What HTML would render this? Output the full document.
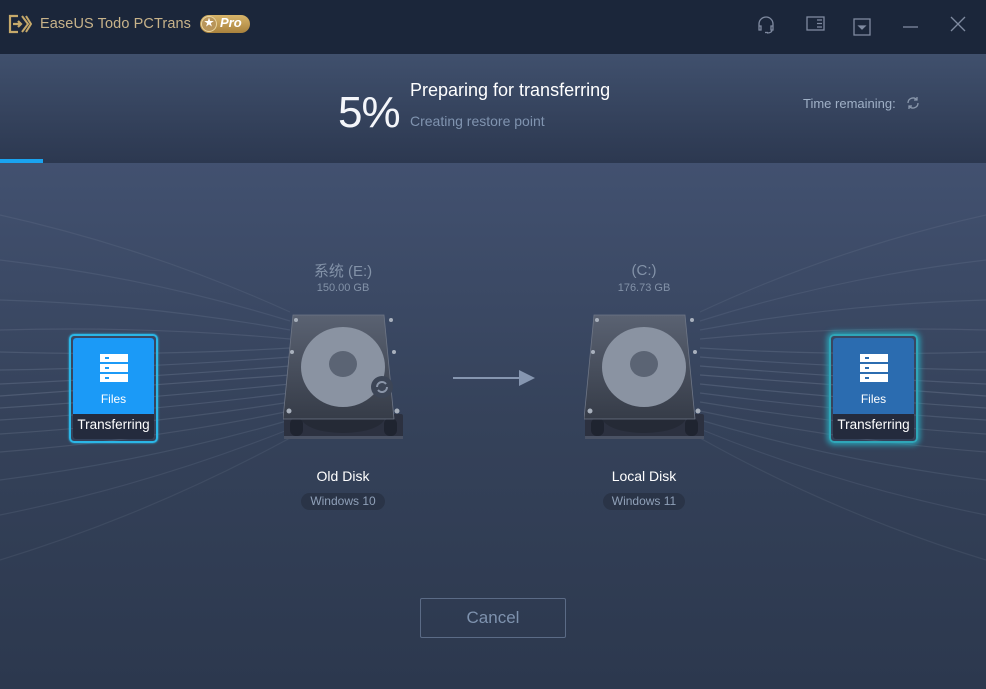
<!DOCTYPE html>
<html><head><meta charset="utf-8"><style>
*{margin:0;padding:0;box-sizing:border-box}
body{width:986px;height:689px;overflow:hidden;font-family:"Liberation Sans","Noto Sans CJK SC",sans-serif;background:linear-gradient(#425170 160px,#35425a 420px,#2c384e 689px);position:relative;color:#fff}
.abs{position:absolute}
#title{left:0;top:0;width:986px;height:54px;background:#1b263a}
#hdr{left:0;top:54px;width:986px;height:109px;background:linear-gradient(#40506d,#2c3850)}
.box{position:absolute;width:89px;height:109px;border:2px solid #2bb6e6;border-radius:5px;padding:2px}
.box .in{width:100%;height:100%;border-radius:3px;overflow:hidden;background:#242b3d}
.box .top{height:76px;text-align:center;font-size:12px;padding-top:16px}
.box .lab{height:25px;text-align:center;font-size:13.5px;line-height:22px;color:#fff}
.srv{width:28px;height:8px;background:#fff;margin:0 auto 2px;position:relative}
.srv:after{content:"";position:absolute;left:5px;top:3px;width:4px;height:2px;background:var(--c)}
.cap{position:absolute;text-align:center;width:160px}
.pill{display:inline-block;background:#2a3447;color:#8fa0b8;font-size:12px;border-radius:9px;padding:1px 9px 2px}
</style></head><body>
<div id="title" class="abs">
<svg class="abs" style="left:8px;top:14px" width="24" height="20" viewBox="0 0 24 20"><g fill="none" stroke="#c6a96a" stroke-width="2.2"><path d="M10 2H2v16h8"/><path d="M5 10h8M10 7l3 3-3 3"/><path d="M14 2l6 8-6 8M18 2l5 8-5 8" stroke-width="2"/></g></svg>
<div class="abs" style="left:40px;top:16px;font-size:14.5px;color:#c8b38a;letter-spacing:0.1px">EaseUS Todo PCTrans</div>
<div class="abs" style="left:200px;top:15px;width:50px;height:18px;border-radius:9px;background:linear-gradient(#d7b46a,#a9823d)"></div>
<div class="abs" style="left:201px;top:16px;width:16px;height:16px;border-radius:50%;background:#b8955a;border:1.5px solid #e8d4a0;color:#fff;font-size:10px;text-align:center;line-height:13px">★</div>
<div class="abs" style="left:220px;top:15px;font-size:13px;font-weight:bold;font-style:italic;color:#fff">Pro</div>
<svg class="abs" style="left:755px;top:14px" width="220" height="22" viewBox="0 0 220 22" fill="none" stroke="#7f8aa0" stroke-width="1.3">
<path d="M4 15V10a7 7 0 0 1 14 0v5M4 12h2v4H4zM16 12h2v4h-2zM17 16q0 3-5 3"/><path d="M10 18.5h3"/>
<rect x="52" y="3" width="17" height="13"/><path d="M62 6h5M62 9.5h5M62 13h5"/>
<rect x="99" y="5" width="16" height="16"/><path d="M104 12h6l-3 3z" fill="#7f8aa0"/>
<path d="M148 13h15"/>
<path d="M196 3l14 14M210 3l-14 14"/>
</svg>
</div>
<div id="hdr" class="abs"></div>
<div class="abs" style="left:0;top:159px;width:43px;height:4px;background:#1aa3f0"></div>
<div class="abs" style="left:338px;top:88px;font-size:44px;color:#f4f6fa;letter-spacing:-1px">5%</div>
<div class="abs" style="left:410px;top:80px;font-size:18px;color:#fff">Preparing for transferring</div>
<div class="abs" style="left:410px;top:113px;font-size:14px;color:#8094b0">Creating restore point</div>
<div class="abs" style="left:803px;top:96px;font-size:13px;color:#9fb0c6">Time remaining:</div>
<svg class="abs" style="left:906px;top:96px" width="14" height="14" viewBox="0 0 14 14" fill="none" stroke="#8a98ac" stroke-width="1.3"><path d="M2 7a5 5 0 0 1 9-3M12 7a5 5 0 0 1-9 3"/><path d="M11 1v3H8M3 13v-3h3"/></svg>

<svg class="abs" id="rays" style="left:0;top:163px" width="986" height="420" viewBox="0 163 986 420"></svg>

<svg class="abs" style="left:453px;top:368px" width="82" height="20"><path d="M0 10h66" stroke="#8696b0" stroke-width="2"/><path d="M66 2l16 8-16 8z" fill="#8696b0"/></svg>

<div class="box" style="left:69px;top:334px;box-shadow:0 0 2px #2bb6e6"><div class="in"><div class="top" style="background:#1b9af7;--c:#1b9af7"><div class="srv"></div><div class="srv"></div><div class="srv"></div><div style="margin-top:10px">Files</div></div><div class="lab">Transferring</div></div></div>
<div class="box" style="left:829px;top:334px;border-color:#2fa6b8;box-shadow:0 0 6px 2px #2b9fb5"><div class="in"><div class="top" style="background:#2b6cb0;--c:#2b6cb0"><div class="srv"></div><div class="srv"></div><div class="srv"></div><div style="margin-top:10px">Files</div></div><div class="lab">Transferring</div></div></div>

<div class="cap" style="left:263px;top:260px;color:#8392a8;font-size:15px">系统 (E:)</div>
<div class="cap" style="left:263px;top:282px;color:#8392a8;font-size:11px">150.00 GB</div>
<div class="cap" style="left:564px;top:262px;color:#8392a8;font-size:15px">(C:)</div>
<div class="cap" style="left:564px;top:282px;color:#8392a8;font-size:11px">176.73 GB</div>

<svg class="abs disk" style="left:283px;top:314px" width="121" height="126" viewBox="0 0 121 126">
<defs><linearGradient id="dg" x1="0" y1="0" x2="0" y2="1"><stop offset="0" stop-color="#5a6272"/><stop offset="1" stop-color="#363c48"/></linearGradient></defs>
<rect x="1" y="100" width="119" height="25" rx="2" fill="#2c3140"/><rect x="1" y="122" width="119" height="3" fill="#4a5264"/>
<ellipse cx="60" cy="103" rx="42" ry="16" fill="#252a36"/>
<rect x="7" y="104" width="13" height="18" rx="6" fill="#1f2430"/><rect x="101" y="104" width="13" height="18" rx="6" fill="#1f2430"/>
<path d="M10 1h91l10 104H0z" fill="url(#dg)" stroke="#6e7686" stroke-width="0.8"/>
<ellipse cx="60" cy="53" rx="42" ry="40" fill="#8a93a2"/><ellipse cx="60" cy="50" rx="14" ry="13" fill="#5b6474"/>
<g fill="#a8b0bc"><circle cx="13" cy="6" r="2"/><circle cx="108" cy="6" r="2"/><circle cx="9" cy="38" r="2"/><circle cx="111" cy="38" r="2"/><circle cx="6" cy="97" r="2.5"/><circle cx="114" cy="97" r="2.5"/></g>
<circle cx="99" cy="73" r="11" fill="#3c4556"/><path d="M94 73a5 5 0 0 1 9-3M104 73a5 5 0 0 1-9 3" stroke="#8a95a8" stroke-width="2" fill="none"/>
</svg>
<svg class="abs disk" style="left:584px;top:314px" width="121" height="126" viewBox="0 0 121 126">
<rect x="1" y="100" width="119" height="25" rx="2" fill="#2c3140"/><rect x="1" y="122" width="119" height="3" fill="#4a5264"/>
<ellipse cx="60" cy="103" rx="42" ry="16" fill="#252a36"/>
<rect x="7" y="104" width="13" height="18" rx="6" fill="#1f2430"/><rect x="101" y="104" width="13" height="18" rx="6" fill="#1f2430"/>
<path d="M10 1h91l10 104H0z" fill="url(#dg)" stroke="#6e7686" stroke-width="0.8"/>
<ellipse cx="60" cy="53" rx="42" ry="40" fill="#8a93a2"/><ellipse cx="60" cy="50" rx="14" ry="13" fill="#5b6474"/>
<g fill="#a8b0bc"><circle cx="13" cy="6" r="2"/><circle cx="108" cy="6" r="2"/><circle cx="9" cy="38" r="2"/><circle cx="111" cy="38" r="2"/><circle cx="6" cy="97" r="2.5"/><circle cx="114" cy="97" r="2.5"/></g>
</svg>

<div class="cap" style="left:263px;top:468px;font-size:14px">Old Disk</div>
<div class="cap" style="left:263px;top:492px"><span class="pill">Windows 10</span></div>
<div class="cap" style="left:564px;top:468px;font-size:14px">Local Disk</div>
<div class="cap" style="left:564px;top:492px"><span class="pill">Windows 11</span></div>

<div class="abs" style="left:420px;top:598px;width:146px;height:40px;border:1px solid #5b6b86;border-radius:2px;color:#7e92ae;font-size:17px;text-align:center;line-height:38px">Cancel</div>
<script>
var s=document.getElementById('rays'),h='';
var L=[215,260,300,330,352,370,384,396,408,420,434,452,480,515,560];
for(var i=0;i<L.length;i++){var y0=L[i];var y1=312+i*9;
var t=Math.abs(i-7)/7;var a=(0.16-0.08*t).toFixed(3);
var c=(y0+y1)/2+(y0<y1?-15:15)*t;
h+='<path d="M0 '+y0+' Q150 '+c+' 290 '+y1+'" stroke="rgba(200,212,232,'+a+')" fill="none" stroke-width="1.2"/>';
h+='<path d="M986 '+y0+' Q836 '+c+' 700 '+y1+'" stroke="rgba(200,212,232,'+a+')" fill="none" stroke-width="1.2"/>';}
s.innerHTML=h;
</script>
</body></html>
